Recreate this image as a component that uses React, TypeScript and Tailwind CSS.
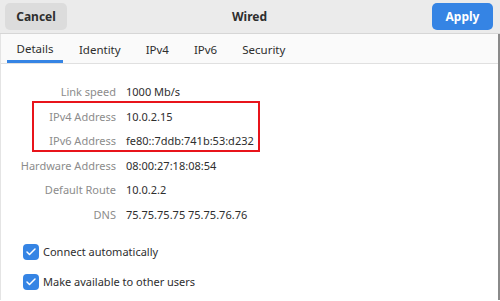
import { Check } from 'lucide-react';

const rows = [
  { label: 'Link speed', value: '1000 Mb/s' },
  { label: 'IPv4 Address', value: '10.0.2.15' },
  { label: 'IPv6 Address', value: 'fe80::7ddb:741b:53:d232' },
  { label: 'Hardware Address', value: '08:00:27:18:08:54' },
  { label: 'Default Route', value: '10.0.2.2' },
  { label: 'DNS', value: '75.75.75.75 75.75.76.76' },
];

const tabs = ['Details', 'Identity', 'IPv4', 'IPv6', 'Security'];

function Row({ label, value }: { label: string; value: string }) {
  return (
    <div className="flex h-[24.5px] items-center">
      <span className="w-[115px] shrink-0 text-right text-[#8c8c8c]">{label}</span>
      <span className="pl-[10px] text-[#2e2e2e]">{value}</span>
    </div>
  );
}

function Checkbox({ label }: { label: string }) {
  return (
    <div className="flex items-center gap-[4px] pl-[22px]">
      <div className="flex h-[16px] w-[16px] items-center justify-center rounded-[4px] bg-[#3584e4]">
        <Check size={12} strokeWidth={3} color="white" />
      </div>
      <span className="text-[#2e2e2e]">{label}</span>
    </div>
  );
}

export default function App() {
  return (
    <div
      className="h-[301px] w-[500px] overflow-hidden bg-white text-[11px]"
      style={{ fontFamily: '"Noto Sans", sans-serif' }}
    >
      <header className="flex h-[34px] items-center justify-between border-b border-[#d6d6d6] bg-[#ebebeb] px-[5px] text-[12px]">
        <button className="h-[27px] w-[62px] rounded-[5px] bg-[#dcdcdc] font-bold text-[#2e2e2e]">
          Cancel
        </button>
        <span className="font-bold text-[#2e2e2e]">Wired</span>
        <button className="mr-[2px] h-[27px] w-[61px] rounded-[5px] bg-[#3584e4] font-bold text-white">
          Apply
        </button>
      </header>

      <div className="flex h-[266px] border-r-2 border-[#8a8a8a]">
        <div className="flex-1 border-l border-[#e4e4e4]">
          <nav className="flex h-[30px] border-b border-[#e0e0e0] bg-[#fafafa] pl-[6px] text-[11.5px]">
            {tabs.map((t, i) => (
              <div
                key={t}
                className={
                  i === 0
                    ? 'flex items-center border-b-[3px] border-[#3584e4] px-[9.5px] pt-[3px] text-[#2e2e2e]'
                    : i === 1
                      ? 'ml-[3.5px] flex items-center px-[12.5px] pt-[3px] text-[#2e2e2e]'
                      : 'flex items-center px-[12.5px] pt-[3px] text-[#2e2e2e]'
                }
              >
                {t}
              </div>
            ))}
          </nav>

          <div className="relative pt-[16px]">
            {rows.map((r) => (
              <Row key={r.label} {...r} />
            ))}
            <div className="absolute left-[31px] top-[37px] h-[51px] w-[228px] border-2 border-[#e8141b]" />
          </div>

          <div className="mt-[17px] flex flex-col gap-[13px]">
            <Checkbox label="Connect automatically" />
            <Checkbox label="Make available to other users" />
          </div>
        </div>
      </div>
    </div>
  );
}
